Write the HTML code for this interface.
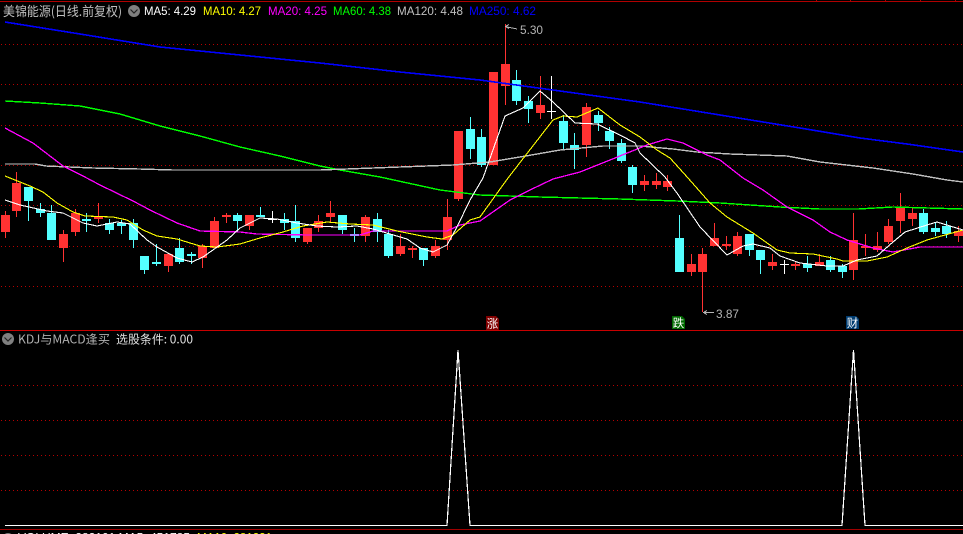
<!DOCTYPE html>
<html lang="zh">
<head>
<meta charset="utf-8">
<title>美锦能源</title>
<style>
html,body{margin:0;padding:0;background:#000;width:963px;height:534px;overflow:hidden}
svg{display:block}
text{font-family:"Liberation Sans","WenQuanYi Zen Hei","Noto Sans CJK SC",sans-serif;font-size:12px}
.c{font-family:"WenQuanYi Zen Hei","Noto Sans CJK SC","Liberation Sans",sans-serif;font-size:13px}
</style>
</head>
<body>
<svg xmlns="http://www.w3.org/2000/svg" width="963" height="534" viewBox="0 0 963 534">
<rect width="963" height="534" fill="#000"/>

<!-- frame lines -->
<g shape-rendering="crispEdges" fill="#b00000">
<rect x="0" y="1" width="963" height="1"/>
<rect x="816" y="0" width="1" height="1"/><rect x="850" y="0" width="1" height="1"/><rect x="885" y="0" width="1" height="1"/><rect x="920" y="0" width="1" height="1"/><rect x="955" y="0" width="1" height="1"/>
<rect x="0" y="330" width="963" height="1" fill="#c80000"/>
<rect x="0" y="529" width="963" height="1" fill="#a00000"/>
</g>

<!-- dotted grid -->
<g stroke="#b80000" stroke-width="1" stroke-dasharray="1 3" shape-rendering="crispEdges" fill="none">
<path d="M1 44.5H963M1 84.5H963M1 125.5H963M1 165.5H963M1 205.5H963M1 246.5H963M1 286.5H963M1 385.5H963M1 420.5H963M1 455.5H963M1 490.5H963"/>
</g>

<!-- candles -->
<path shape-rendering="crispEdges" fill="#ff3232" d="
M5 211h1V238h-1zM1 215h9V232h-9z
M16 172h1V217h-1zM12 183h9V211h-9z
M63 230h1V262h-1zM59 234h9V248h-9z
M75 209h1V236h-1zM71 213h9V232h-9z
M98 203h1V223h-1zM94 217h9V219h-9z
M168 254h1V272h-1zM164 254h9V266h-9z
M202 244h1V268h-1zM198 246h9V258h-9z
M214 217h1V248h-1zM210 221h9V248h-9z
M226 213h1V223h-1zM222 215h9V217h-9z
M249 215h1V230h-1zM245 215h9V226h-9z
M307 228h1V244h-1zM303 228h9V242h-9z
M318 215h1V232h-1zM314 221h9V228h-9z
M330 201h1V223h-1zM326 213h9V217h-9z
M365 215h1V242h-1zM361 217h9V236h-9z
M400 234h1V256h-1zM396 246h9V254h-9z
M412 246h1V258h-1zM408 248h9V250h-9z
M435 240h1V258h-1zM431 246h9V256h-9z
M447 199h1V250h-1zM443 217h9V240h-9z
M458 131h1V201h-1zM454 131h9V199h-9z
M489 72h9V165h-9z
M505 24h1V105h-1zM501 64h9V86h-9z
M540 76h1V119h-1zM536 105h9V113h-9z
M586 103h1V157h-1zM582 107h9V145h-9z
M644 175h1V191h-1zM640 181h9V185h-9z
M656 173h1V189h-1zM652 181h9V185h-9z
M667 175h1V191h-1zM663 181h9V187h-9z
M691 254h1V276h-1zM687 264h9V272h-9z
M702 248h1V312h-1zM698 254h9V272h-9z
M714 223h1V246h-1zM710 238h9V246h-9z
M726 236h1V250h-1zM722 244h9V246h-9z
M737 232h1V256h-1zM733 236h9V254h-9z
M772 254h1V270h-1zM768 262h9V266h-9z
M795 262h1V270h-1zM791 264h9V266h-9z
M819 254h1V266h-1zM815 262h9V266h-9z
M853 213h1V280h-1zM849 240h9V270h-9z
M865 234h1V256h-1zM861 246h9V248h-9z
M877 232h1V252h-1zM873 246h9V250h-9z
M888 219h1V244h-1zM884 226h9V242h-9z
M900 193h1V233h-1zM896 208h9V221h-9z
M912 208h1V226h-1zM908 213h9V219h-9z
M958 226h1V242h-1zM954 231h9V236h-9z"/>
<path shape-rendering="crispEdges" fill="#54ffff" d="
M28 187h1V221h-1zM24 187h9V201h-9z
M40 203h1V217h-1zM36 209h9V213h-9z
M51 205h1V240h-1zM47 213h9V240h-9z
M86 213h1V232h-1zM82 219h9V221h-9z
M109 219h1V234h-1zM105 223h9V230h-9z
M121 220h1V234h-1zM117 223h9V226h-9z
M133 219h1V248h-1zM129 223h9V240h-9z
M144 256h1V274h-1zM140 256h9V270h-9z
M156 244h1V266h-1zM152 262h9V264h-9z
M179 238h1V264h-1zM175 248h9V262h-9z
M191 252h1V264h-1zM187 254h9V256h-9z
M237 213h1V232h-1zM233 215h9V221h-9z
M260 207h1V217h-1zM256 215h9V217h-9z
M284 213h1V230h-1zM280 219h9V223h-9z
M295 205h1V242h-1zM291 221h9V238h-9z
M342 215h1V234h-1zM338 215h9V230h-9z
M354 228h1V242h-1zM350 234h9V236h-9z
M377 213h1V242h-1zM373 219h9V232h-9z
M388 230h1V258h-1zM384 234h9V256h-9z
M423 248h1V266h-1zM419 248h9V260h-9z
M470 117h1V159h-1zM466 129h9V149h-9z
M481 129h1V167h-1zM477 137h9V165h-9z
M516 70h1V105h-1zM512 80h9V101h-9z
M528 96h1V123h-1zM524 101h9V109h-9z
M563 115h1V149h-1zM559 121h9V143h-9z
M574 133h1V169h-1zM570 145h9V150h-9z
M598 111h1V131h-1zM594 115h9V123h-9z
M609 127h1V149h-1zM605 131h9V141h-9z
M621 139h1V163h-1zM617 143h9V161h-9z
M632 165h1V193h-1zM628 167h9V185h-9z
M679 215h1V272h-1zM675 238h9V272h-9z
M749 234h1V256h-1zM745 234h9V250h-9z
M760 250h1V274h-1zM756 250h9V260h-9z
M807 256h1V272h-1zM803 264h9V268h-9z
M830 256h1V272h-1zM826 260h9V270h-9z
M842 264h1V278h-1zM838 266h9V272h-9z
M923 209h1V234h-1zM919 213h9V232h-9z
M935 223h1V236h-1zM931 228h9V232h-9z
M946 221h1V238h-1zM942 226h9V234h-9z"/>
<path shape-rendering="crispEdges" fill="#fff" d="
M272 211h1V223h-1zM268 219h9v1h-9z
M551 76h1V119h-1zM547 111h9v1h-9z
M784 260h1V274h-1zM780 264h9v1h-9z"/>

<!-- moving averages -->
<g fill="none" shape-rendering="crispEdges">
<polyline stroke="#0000ff" stroke-width="1.6" points="5,22 80,34 160,47 240,55 320,63 400,72 480,80 560,91 640,102 720,115 800,128 860,138 907,144 963,152"/>
<polyline stroke="#00ff00" stroke-width="1.4" points="5,101 40,103 80,106 120,114 160,126 200,136 240,147 280,156 320,166 340,170 380,177 440,190 480,195 540,197 620,199 677,201 720,203 780,207 820,209 858,209 893,207 963,209"/>
<polyline stroke="#c0c0c0" stroke-width="1.4" points="5,164 35,164 46,166 93,168 139,169 173,170 320,170 400,167 453,165 490,162 520,157 560,150 603,146 640,146 673,149 697,152 730,154 787,156 820,162 873,168 913,174 947,180 963,182"/>
<polyline stroke="#ff00ff" stroke-width="1.3" points="5,128 33,143 63,166 83,176 100,185 133,201 150,210 177,223 200,231 240,232 257,234 307,235 360,235 373,231 407,231 447,231 460,225 480,221 510,200 530,190 553,179 580,172 610,160 647,145 667,139 683,143 707,155 720,160 743,178 763,190 787,207 813,220 830,232 847,240 873,248 893,252 920,247 963,247"/>
<polyline stroke="#ffff00" stroke-width="1.1" points="5,176 30,186 43,192 57,203 73,212 85,216 113,217 127,220 143,230 157,236 177,239 200,246 217,247 240,244 260,238 283,232 303,226 327,222 350,224 373,225 397,231 427,237 442,239 453,235 470,220 480,217 508,178 553,120 563,116 577,117 598,108 620,125 640,137 657,150 670,158 688,178 710,203 727,217 753,233 777,250 790,253 813,254 837,259 843,261 867,261 887,257 907,248 927,240 963,230"/>
<polyline stroke="#ffffff" stroke-width="1.1" points="5,200 20,205 47,211 63,213 83,223 97,226 117,222 130,224 147,240 157,247 177,258 192,262 203,257 227,240 240,228 260,218 277,219 297,223 317,226 337,227 357,226 373,229 407,239 420,248 433,252 447,245 457,227 470,200 483,178 505,116 523,108 540,91 553,102 575,123 597,124 620,135 635,143 640,153 665,177 677,193 700,227 727,255 743,246 753,244 770,248 780,256 800,263 827,266 843,266 857,260 877,256 893,242 905,232 927,225 937,222 963,230"/>
</g>

<!-- high/low labels -->
<g fill="none" stroke="#b4b4b4" stroke-width="1" shape-rendering="crispEdges">
<path d="M505 26.5L517 29M505.5 26.5L509 24.5M505.5 26.5L509 28.5"/>
<path d="M703 312.5H714M703.5 312.5L707 310.5M703.5 312.5L707 314.5"/>
</g>
<text x="520" y="34" fill="#b4b4b4" textLength="23" lengthAdjust="spacingAndGlyphs">5.30</text>
<text x="716" y="318" fill="#b4b4b4" textLength="23" lengthAdjust="spacingAndGlyphs">3.87</text>

<!-- header -->
<text class="c" x="3" y="16" fill="#c0c0c0" textLength="119" lengthAdjust="spacingAndGlyphs">美锦能源(日线.前复权)</text>
<circle cx="134" cy="11" r="6" fill="#808080"/>
<path d="M130.5 9.5L134 13L137.5 9.5" fill="none" stroke="#222" stroke-width="1.2"/>
<text x="144" y="15" fill="#ffffff" textLength="52" lengthAdjust="spacingAndGlyphs">MA5: 4.29</text>
<text x="203" y="15" fill="#ffff00" textLength="58" lengthAdjust="spacingAndGlyphs">MA10: 4.27</text>
<text x="268" y="15" fill="#ff00ff" textLength="59" lengthAdjust="spacingAndGlyphs">MA20: 4.25</text>
<text x="333" y="15" fill="#00ff00" textLength="58" lengthAdjust="spacingAndGlyphs">MA60: 4.38</text>
<text x="397" y="15" fill="#c0c0c0" textLength="66" lengthAdjust="spacingAndGlyphs">MA120: 4.48</text>
<text x="469" y="15" fill="#0000ff" textLength="67" lengthAdjust="spacingAndGlyphs">MA250: 4.62</text>

<!-- badges -->
<path d="M486 316H496L499 319V330H486Z" fill="#800000"/>
<text x="492.5" y="327.5" fill="#fff" text-anchor="middle" style="font-size:11.5px">涨</text>
<path d="M672 316H682L685 319V329H672Z" fill="#006800"/>
<text x="678.5" y="327" fill="#fff" text-anchor="middle" style="font-size:11.5px">跌</text>
<path d="M846 316H856L859 319V329H846Z" fill="#003c70"/>
<text x="852.5" y="327" fill="#fff" text-anchor="middle" style="font-size:11.5px">财</text>

<!-- lower panel header -->
<circle cx="8" cy="339" r="6" fill="#808080"/>
<path d="M4.5 337.5L8 341L11.5 337.5" fill="none" stroke="#222" stroke-width="1.2"/>
<text class="c" x="18" y="343.5" fill="#b0b0b0" style="font-size:12px" textLength="92" lengthAdjust="spacingAndGlyphs">KDJ与MACD逢买</text>
<text class="c" x="116" y="343.5" fill="#e0e0e0" style="font-size:12px" textLength="77" lengthAdjust="spacingAndGlyphs">选股条件: 0.00</text>

<!-- signal -->
<g fill="none" stroke="#fff" stroke-width="1.2" shape-rendering="crispEdges">
<path d="M5 525.5H447L458 350L470 525.5H842L853.5 350L865 525.5H963"/>
</g>

<!-- clipped bottom row -->
<circle cx="8" cy="539" r="6" fill="#808080"/>
<text x="18" y="541.6" fill="#ffffff" textLength="172" lengthAdjust="spacingAndGlyphs">VOLUME: 282101 MA5: 451785</text>
<text x="197" y="541.6" fill="#ffff00" textLength="75" lengthAdjust="spacingAndGlyphs">MA10: 281221</text>
</svg>
</body>
</html>
